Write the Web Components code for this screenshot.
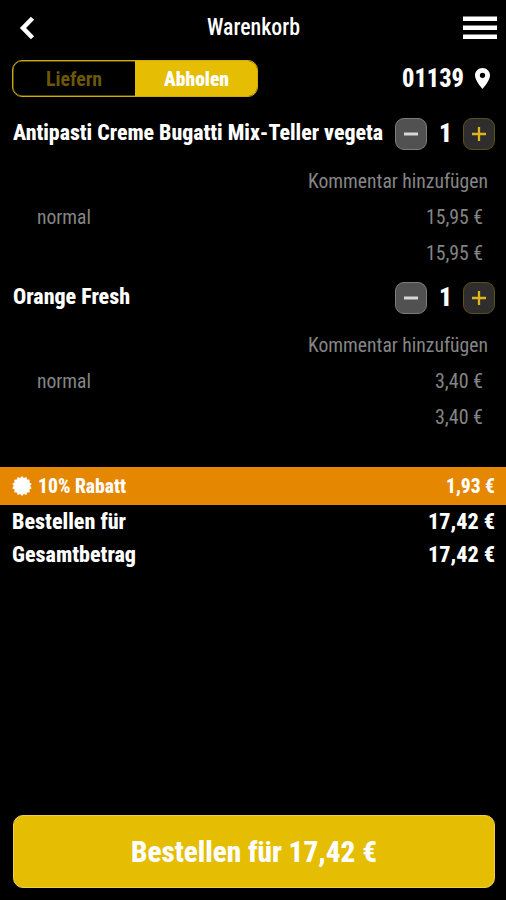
<!DOCTYPE html>
<html lang="de">
<head>
<meta charset="utf-8">
<title>Warenkorb</title>
<style>
  body {
    margin: 0;
    background: #000;
    color: #fff;
    font-family: "Roboto Condensed", Roboto, "Liberation Sans", sans-serif;
    font-stretch: 75%;
  }
</style>
</head>
<body>
<cart-page>
  <cart-header slot="header"><fit-text width="93" size="23" weight="500">Warenkorb</fit-text></cart-header>
  <order-mode slot="mode">
    <fit-text slot="delivery" width="56" size="21" weight="700">Liefern</fit-text>
    <fit-text slot="pickup" width="65" size="21" weight="900">Abholen</fit-text>
    <fit-text slot="zip" width="62" size="25" weight="800">01139</fit-text>
  </order-mode>
  <cart-item name="Antipasti Creme Bugatti Mix-Teller vegeta" name-width="370" size="normal" price="15,95 €" price-width="57"></cart-item>
  <cart-item name="Orange Fresh" name-width="117" size="normal" price="3,40 €" price-width="48"></cart-item>
  <discount-bar slot="sum">
    <fit-text width="88" size="19.5" weight="800">10% Rabatt</fit-text>
    <fit-text slot="value" width="49" size="19.5" weight="800">1,93 €</fit-text>
  </discount-bar>
  <total-row slot="sum">
    <fit-text width="114" size="22.5" weight="800">Bestellen für</fit-text>
    <fit-text slot="value" width="67" size="22.5" weight="800">17,42 €</fit-text>
  </total-row>
  <total-row slot="sum">
    <fit-text width="124" size="22.5" weight="800">Gesamtbetrag</fit-text>
    <fit-text slot="value" width="67" size="22.5" weight="800">17,42 €</fit-text>
  </total-row>
  <order-button slot="footer"><fit-text width="246" size="30" weight="800">Bestellen für 17,42 €</fit-text></order-button>
</cart-page>

<script>
class BaseElement extends HTMLElement {
  constructor() {
    super();
    this.attachShadow({ mode: 'open' });
  }

  connectedCallback() {
    this.shadowRoot.innerHTML = this.render();
  }
}

// One line of text, condensed to the given width
class FitText extends BaseElement {
  connectedCallback() {
    super.connectedCallback();
    this._fit();
  }

  _fit() {
    const line = this.shadowRoot.querySelector('span');
    const natural = line.getBoundingClientRect().width;
    const width = Number(this.getAttribute('width'));
    if (natural && width) {
      line.style.transform = `scaleX(${width / natural})`;
    }
  }

  render() {
    return `
      <style>
        :host {
          display: block;
          flex: none;
          width: ${this.getAttribute('width')}px;
          font-size: ${this.getAttribute('size')}px;
          font-weight: ${this.getAttribute('weight') || 400};
          line-height: 1.2;
          white-space: nowrap;
        }
        span { display: inline-block; transform-origin: 0 50%; }
      </style>
      <span><slot></slot></span>
    `;
  }
}

class CartPage extends BaseElement {
  render() {
    return `
      <style>
        :host { display: flex; flex-direction: column; width: 506px; height: 900px; overflow: hidden; }
        .items { display: flex; flex-direction: column; padding-top: 20px; }
        .sum { margin-top: 22px; }
        .footer { margin-top: auto; padding: 0 11.5px 12px 12.5px; }
      </style>
      <slot name="header"></slot>
      <slot name="mode"></slot>
      <div class="items"><slot></slot></div>
      <div class="sum"><slot name="sum"></slot></div>
      <div class="footer"><slot name="footer"></slot></div>
    `;
  }
}

class CartHeader extends BaseElement {
  render() {
    return `
      <style>
        :host {
          display: grid;
          grid-template-columns: 1fr auto 1fr;
          align-items: center;
          height: 55px;
          padding: 0 9px 0 17px;
        }
        .title { margin-left: -8px; padding-top: 1px; }
        .menu { justify-self: end; }
        svg { display: block; }
      </style>
      <svg width="20" height="26" viewBox="0 0 20 26" fill="none" stroke="#fff" stroke-width="4.5">
        <path d="M15.5 3.2 6 13l9.5 9.8"/>
      </svg>
      <div class="title"><slot></slot></div>
      <svg class="menu" width="34" height="24" viewBox="0 0 34 24" fill="#fff">
        <path d="M0 .5h34V5H0zM0 9.5h34V14H0zM0 18.5h34V23H0z"/>
      </svg>
    `;
  }
}

class OrderMode extends BaseElement {
  render() {
    return `
      <style>
        :host {
          display: flex;
          align-items: center;
          justify-content: space-between;
          height: 37px;
          padding: 5px 16px 0 12px;
        }
        .toggle {
          display: flex;
          box-sizing: border-box;
          width: 246px;
          height: 37px;
          border: 1px solid #d0ac0a;
          box-shadow: inset 0 0 0 .5px #a88b08;
          border-radius: 10px;
          overflow: hidden;
        }
        .toggle div { flex: 1; display: flex; align-items: center; justify-content: center; padding-top: 2px; }
        .off { color: #6b5807; }
        .on { background: #e5bd02; }
        .place { display: flex; align-items: center; gap: 11px; }
      </style>
      <div class="toggle">
        <div class="off"><slot name="delivery"></slot></div>
        <div class="on"><slot name="pickup"></slot></div>
      </div>
      <div class="place">
        <slot name="zip"></slot>
        <svg width="15" height="21" viewBox="5 2 14 20" preserveAspectRatio="none" fill="#fff">
          <path d="M12 2C8.130 2 5 5.130 5 9c0 5.250 7 13 7 13s7-7.750 7-13c0-3.870-3.130-7-7-7zm0 9.500a2.500 2.500 0 0 1 0-5 2.500 2.500 0 0 1 0 5z"/>
        </svg>
      </div>
    `;
  }
}

class AmountStepper extends BaseElement {
  render() {
    return `
      <style>
        :host { display: flex; align-items: center; justify-content: space-between; width: 100px; }
        button {
          display: grid;
          place-items: center;
          box-sizing: border-box;
          width: 32px;
          height: 32px;
          padding: 0;
          border: 1px solid #7d7d7d;
          border-radius: 9px;
          background: #515151;
        }
        .plus { border-color: #5c5012; background: #2f2d2e; }
      </style>
      <button class="minus" aria-label="weniger">
        <svg width="14" height="14"><path d="M0 7h14" stroke="#d6d6d6" stroke-width="3"/></svg>
      </button>
      <fit-text width="13" size="25" weight="900">1</fit-text>
      <button class="plus" aria-label="mehr">
        <svg width="14" height="14"><path d="M0 7h14M7 0v14" stroke="#e0b51c" stroke-width="2.3"/></svg>
      </button>
    `;
  }
}

class CartItem extends BaseElement {
  render() {
    const price = `<fit-text width="${this.getAttribute('price-width')}" size="20">${this.getAttribute('price')}</fit-text>`;
    return `
      <style>
        :host { display: block; height: 164px; }
        .row { display: flex; align-items: center; justify-content: space-between; }
        .head { height: 34px; padding: 0 11px 0 12.5px; }
        .name { padding-bottom: 3px; }
        .comment, .line { height: 36px; color: #858585; }
        .comment { justify-content: flex-end; padding-right: 18px; margin-top: 12px; }
        .line { padding: 0 23px 0 36.5px; }
        .total { justify-content: flex-end; }
      </style>
      <div class="row head">
        <fit-text class="name" width="${this.getAttribute('name-width')}" size="22.5" weight="800">${this.getAttribute('name')}</fit-text>
        <amount-stepper></amount-stepper>
      </div>
      <div class="row comment"><fit-text width="180" size="20">Kommentar hinzufügen</fit-text></div>
      <div class="row line"><fit-text width="54" size="20">${this.getAttribute('size')}</fit-text>${price}</div>
      <div class="row line total">${price}</div>
    `;
  }
}

class DiscountBar extends BaseElement {
  render() {
    // star with rounded-off spikes
    const points = Array.from({ length: 28 }, (_, i) => {
      const r = i % 2 ? 8.2 : 10;
      const a = i * Math.PI / 14;
      return `${(10 + r * Math.sin(a)).toFixed(2)},${(10 - r * Math.cos(a)).toFixed(2)}`;
    }).join(' ');
    return `
      <style>
        :host {
          display: flex;
          align-items: center;
          justify-content: space-between;
          height: 38px;
          padding: 0 11px 0 12px;
          background: #e68702;
        }
        .label { display: flex; align-items: center; gap: 6px; }
        ::slotted(fit-text) { padding-top: 2px; }
      </style>
      <div class="label">
        <svg width="20" height="20"><polygon points="${points}" fill="#fff"/></svg>
        <slot></slot>
      </div>
      <slot name="value"></slot>
    `;
  }
}

class TotalRow extends BaseElement {
  render() {
    return `
      <style>
        :host {
          display: flex;
          align-items: center;
          justify-content: space-between;
          box-sizing: border-box;
          height: 33px;
          padding: 0 11px 1px 12px;
        }
      </style>
      <slot></slot>
      <slot name="value"></slot>
    `;
  }
}

class OrderButton extends BaseElement {
  render() {
    return `
      <style>
        :host {
          display: flex;
          align-items: center;
          justify-content: center;
          box-sizing: border-box;
          height: 73px;
          border: 1px solid #edd04c;
          border-radius: 10px;
          background: #e5bd02;
        }
      </style>
      <slot></slot>
    `;
  }
}

customElements.define('fit-text', FitText);
customElements.define('cart-page', CartPage);
customElements.define('cart-header', CartHeader);
customElements.define('order-mode', OrderMode);
customElements.define('amount-stepper', AmountStepper);
customElements.define('cart-item', CartItem);
customElements.define('discount-bar', DiscountBar);
customElements.define('total-row', TotalRow);
customElements.define('order-button', OrderButton);
</script>
</body>
</html>
